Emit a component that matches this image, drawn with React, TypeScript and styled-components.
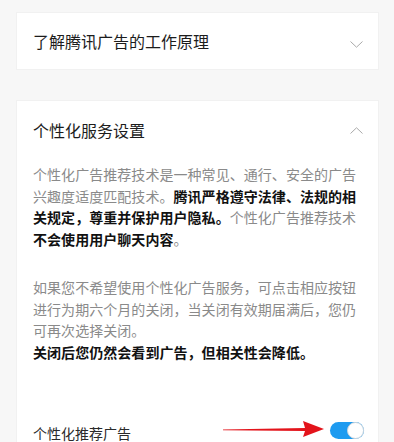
import React from "react";
import styled, { createGlobalStyle } from "styled-components";

const Global = createGlobalStyle`
  html, body { margin: 0; padding: 0; background: #f7f7f7; }
  body { font-family: "Noto Sans CJK SC", "Noto Sans", sans-serif; -webkit-font-smoothing: antialiased; }
  * { box-sizing: border-box; }
`;

const Page = styled.div`
  min-height: 442px;
  padding: 13px 16px 0 17px;
  background: #f7f7f7;
  display: flex;
  flex-direction: column;
`;

const Card = styled.section<{ $mt?: number }>`
  background: #fff;
  margin-top: ${(p) => p.$mt ?? 0}px;
  box-shadow: 0 0 0 1px #f1f1f1;
`;

const Header = styled.div<{ $h?: number; $pt?: number }>`
  display: flex;
  justify-content: space-between;
  align-items: ${(p) => (p.$h ? "center" : "flex-start")};
  height: ${(p) => (p.$h ? `${p.$h}px` : "auto")};
  padding: ${(p) => p.$pt ?? 0}px 15px 0 16px;
  position: relative;
`;

const Title = styled.h2`
  margin: 0;
  font-size: 16px;
  line-height: 24px;
  font-weight: 400;
  color: #1c1c1c;
`;

const ChevronBox = styled.span<{ $top: number }>`
  position: absolute;
  right: 15px;
  top: ${(p) => p.$top}px;
  width: 13px;
  height: 7px;
  display: block;
`;

const Body = styled.div`
  padding: 22px 16px 0 16px;
`;

const Para = styled.p<{ $mt?: number }>`
  margin: ${(p) => p.$mt ?? 0}px 0 0 0;
  font-size: 14px;
  line-height: 21.7px;
  color: #8a8a8a;
  letter-spacing: 0.05px;
`;

const Strong = styled.b`
  color: #111;
  font-weight: 700;
`;

const StrongLine = styled.span`
  display: block;
  color: #111;
  font-weight: 700;
`;

const Row = styled.div`
  margin-top: 57px;
  display: flex;
  align-items: center;
  justify-content: space-between;
  padding: 0 14px 20px 16px;
  position: relative;
`;

const Label = styled.span`
  font-size: 14px;
  line-height: 24px;
  color: #2a2a2a;
`;

const Toggle = styled.span`
  position: relative;
  width: 34px;
  height: 17px;
  border-radius: 9px;
  background: #1e9bf0;
  display: block;
  margin-top: -5px;
`;

const Knob = styled.span`
  position: absolute;
  right: 0;
  top: 0;
  width: 17px;
  height: 17px;
  border-radius: 50%;
  background: #fff;
  border: 1px solid #cfd6dc;
`;

const ArrowSvg = styled.svg`
  position: absolute;
  left: 206px;
  top: 0;
  overflow: visible;
`;

const Chevron = ({ up }: { up?: boolean }) => (
  <svg width="13" height="7" viewBox="0 0 13 7">
    <polyline
      points={up ? "0.5,6.5 6.5,0.8 12.5,6.5" : "0.5,0.5 6.5,6.2 12.5,0.5"}
      fill="none"
      stroke="#a9a9a9"
      strokeWidth="1"
    />
  </svg>
);

export default function App() {
  return (
    <>
      <Global />
      <Page>
        <Card>
          <Header $h={56}>
            <Title>了解腾讯广告的工作原理</Title>
            <ChevronBox $top={16}>
              <Chevron />
            </ChevronBox>
          </Header>
        </Card>
        <Card $mt={32}>
          <Header $pt={17}>
            <Title>个性化服务设置</Title>
            <ChevronBox $top={14}>
              <Chevron up />
            </ChevronBox>
          </Header>
          <Body>
            <Para>
              个性化广告推荐技术是一种常见、通行、安全的广告兴趣度适度匹配技术。
              <Strong>腾讯严格遵守法律、法规的相关规定，尊重并保护用户隐私。</Strong>
              个性化广告推荐技术<Strong>不会使用用户聊天内容</Strong>。
            </Para>
            <Para $mt={26}>
              如果您不希望使用个性化广告服务，可点击相应按钮进行为期六个月的关闭，当关闭有效期届满后，您仍可再次选择关闭。
              <StrongLine>关闭后您仍然会看到广告，但相关性会降低。</StrongLine>
            </Para>
          </Body>
          <Row>
            <Label>个性化推荐广告</Label>
            <ArrowSvg width="101" height="18" viewBox="0 0 101 18">
              <path d="M0 8.6 L82 7 L80 0 L101 8 L80 16 L82 10 L0 9.2 Z" fill="#e3141b" />
            </ArrowSvg>
            <Toggle>
              <Knob />
            </Toggle>
          </Row>
        </Card>
      </Page>
    </>
  );
}
